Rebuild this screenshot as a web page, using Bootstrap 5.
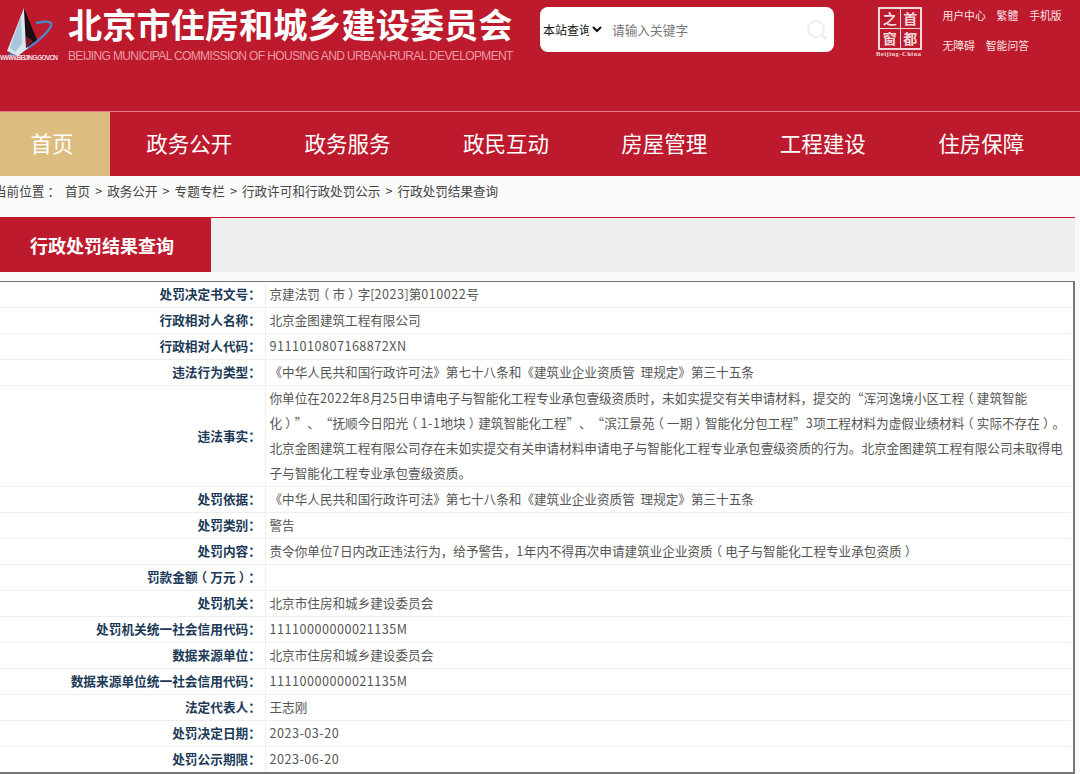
<!DOCTYPE html>
<html lang="zh-CN">
<head>
  <meta charset="UTF-8">
  <meta name="viewport" content="width=device-width, initial-scale=1">
  <title>行政处罚结果查询</title>
  <link href="https://cdn.jsdelivr.net/npm/bootstrap@5.3.0/dist/css/bootstrap.min.css" rel="stylesheet">
  <style>
    body {
      background: #fafafa;
      font-family: "Noto Sans CJK SC", "Liberation Sans", sans-serif;
      font-size: 12.7px;
      color: #555;
      overflow: hidden;
      text-spacing-trim: space-all;
    }
    a { color: inherit; text-decoration: none; }
    /* centred full-width punctuation */
    .pn { font-family: "Noto Sans CJK TC", sans-serif; }
    .pl, .pr { font-feature-settings: "halt"; margin: 0 3.15px; }
    /* digits run a bit wider in the reference */
    .num { letter-spacing: .5px; }
    .wide-space { word-spacing: 3px; }

    /* header */
    .site-top {
      height: 112px;
      background: #bd1a2d;
      border-bottom: 1px solid #e27a86;
    }
    .site-logo { width: 60px; height: 64px; flex: none; margin-top: 2px; }
    .site-names { width: 472px; margin-left: 8px; flex: none; }
    .site-title {
      color: #fff;
      font-size: 34.2px;
      font-weight: 700;
      line-height: 44px;
      margin: 1px 0 0;
      white-space: nowrap;
    }
    .site-sub {
      font-family: "Liberation Sans", sans-serif;
      color: #eb9aa4;
      font-size: 12px;
      line-height: 16px;
      letter-spacing: -.63px;
      margin-top: 3px;
      white-space: nowrap;
    }
    .search-box {
      width: 294px;
      height: 45px;
      margin: 7px 0 0 0;
      background: #fff;
      border-radius: 8px;
      flex: none;
    }
    .search-box select {
      border: 0;
      background: transparent;
      color: #111;
      font-size: 12px;
      width: 66px;
      margin-left: -1px;
      padding: 0;
      outline: 0;
    }
    .search-box input {
      border: 0;
      outline: 0;
      width: 180px;
      margin-left: 5px;
      font-size: 12.7px;
      background: transparent;
    }
    .search-box input::placeholder { color: #777; }
    .search-ico { margin-right: 6px; }
    .seal-wrap { width: 46px; margin: 7px 0 0 44px; flex: none; }
    .seal-box {
      width: 44px;
      height: 43px;
      border: 2px solid #f3d8db;
      display: grid;
      grid-template-columns: 1fr 1fr;
      grid-template-rows: 1fr 1fr;
      gap: 1px;
      background: #f3d8db;
    }
    .seal-box span {
      background: #bd1a2d;
      color: #f3d8db;
      font-size: 14px;
      line-height: 19px;
      text-align: center;
      font-weight: 700;
    }
    .seal-en {
      color: #f3d8db;
      font-family: "Liberation Serif", serif;
      font-size: 6.5px;
      font-weight: 700;
      letter-spacing: .5px;
      line-height: 8px;
      white-space: nowrap;
      margin-left: -2px;
    }
    .top-links { margin: 8px 0 0 18.5px; width: 130px; flex: none; color: #fbe4e6; font-size: 10.8px; }
    .top-links div { height: 30px; line-height: 15px; white-space: nowrap; }
    .top-links a { margin-right: 8.5px; }

    /* nav */
    .main-nav { height: 64px; background: #bd1a2d; }
    .main-nav a {
      width: 158.4px;
      line-height: 62px;
      color: #fff;
      font-size: 21.5px;
      text-align: center;
      flex: none;
    }
    .main-nav a.is-home { width: 110px; background: #dcbd7f; padding-right: 6px; }

    .crumbs { height: 41px; line-height: 29px; margin-left: -6px; color: #444; white-space: nowrap; font-size: 12.6px; }
    .crumbs .pn { margin: 0 5px 0 3px; }
    .crumbs i { font-style: normal; margin: 0 5px; }

    /* title bar */
    .title-bar {
      width: 1075px;
      height: 55px;
      background: #eee;
      border-top: 1px solid #bd1a2d;
    }
    .title-bar h1 {
      width: 211px;
      height: 54px;
      margin: 0;
      padding-left: 30px;
      background: #bd1a2d;
      color: #fff;
      font-size: 18px;
      font-weight: 700;
      line-height: 55px;
    }

    /* table */
    .result-wrap {
      width: 1075px;
      margin-top: 9px;
      border: solid #777;
      border-width: 1px 2px 2px 0;
      background: #fff;
      padding-right: 2px;
    }
    .result-table { margin: 0; table-layout: fixed; --bs-table-bg: #fff; }
    .result-table th, .result-table td {
      padding: 0 0 2px;
      border: 0;
      border-bottom: 1px solid #eee;
      line-height: 23px;
      font-size: 12.6px;
      vertical-align: middle;
    }
    .result-table tr:last-child th, .result-table tr:last-child td { border-bottom: 0; }
    .result-table th {
      width: 265px;
      padding-right: 3.5px;
      text-align: right;
      color: #1c3a57;
      font-size: 12.7px;
      font-weight: 700;
      border-right: 1px solid #eee;
    }
    .result-table td { padding-left: 4px; color: #555; white-space: nowrap; }
    .result-table td.long-cell { padding-bottom: 0; line-height: 25px; }
    .long-cell div { margin: -1px 0 1px; }
  </style>
</head>
<body>

  <!-- header -->
  <div class="site-top d-flex">
    <svg class="site-logo" viewBox="0 0 60 64">
      <path d="M9 53 C26 50 46 34 51 24 C53 19 46 19 36 21" fill="none" stroke="#4d86c6" stroke-width="2.5"/>
      <path d="M24 6 L7 49 L18 54 L28 46 Z" fill="#dbe7f0"/>
      <path d="M21 14 L10 46 L15 50 L22 42 Z" fill="#a9c6dc"/>
      <path d="M24 6 L26 46 L37 38 Z" fill="#1a0d12"/>
      <path d="M26 34 L33 39 L26 46 Z" fill="#7c1722"/>
      <text x="0" y="58" font-size="6.5" font-weight="700" fill="#f2dfe1" font-family="Liberation Sans, sans-serif" textLength="58">WWW.BEIJING.GOV.CN</text>
    </svg>
    <div class="site-names">
      <div class="site-title">北京市住房和城乡建设委员会</div>
      <div class="site-sub">BEIJING MUNICIPAL COMMISSION OF HOUSING AND URBAN-RURAL DEVELOPMENT</div>
    </div>
    <form class="search-box d-flex align-items-center">
      <select aria-label="范围"><option>本站查询</option></select>
      <input type="text" placeholder="请输入关键字">
      <svg class="ms-auto search-ico" width="22" height="22" viewBox="0 0 22 22" fill="none" stroke="#eeeeee" stroke-width="2">
        <circle cx="10" cy="10" r="8"/>
        <path d="M16 16 L20 20" stroke-width="3"/>
      </svg>
    </form>
    <div class="seal-wrap">
      <div class="seal-box">
        <span>之</span><span>首</span><span>窗</span><span>都</span>
      </div>
      <div class="seal-en">Beijing-China</div>
    </div>
    <div class="top-links">
      <div><a href="#">用户中心</a> <a href="#">繁體</a> <a href="#">手机版</a></div>
      <div><a href="#">无障碍</a> <a href="#">智能问答</a></div>
    </div>
  </div>

  <!-- nav -->
  <nav class="main-nav d-flex">
    <a class="is-home" href="#">首页</a>
    <a href="#">政务公开</a>
    <a href="#">政务服务</a>
    <a href="#">政民互动</a>
    <a href="#">房屋管理</a>
    <a href="#">工程建设</a>
    <a href="#">住房保障</a>
  </nav>

  <div class="crumbs">
    当前位置<span class="pn">：</span><a href="#">首页</a><i>&gt;</i><a href="#">政务公开</a><i>&gt;</i><a href="#">专题专栏</a><i>&gt;</i><a href="#">行政许可和行政处罚公示</a><i>&gt;</i><a href="#">行政处罚结果查询</a>
  </div>

  <div class="title-bar">
    <h1>行政处罚结果查询</h1>
  </div>

  <div class="result-wrap">
    <table class="table result-table">
      <tbody>
        <tr><th>处罚决定书文号<span class="pn">：</span></th><td>京建法罚<span class="pl">（</span>市<span class="pr">）</span>字[<span class="num">2023</span>]第<span class="num">010022</span>号</td></tr>
        <tr><th>行政相对人名称<span class="pn">：</span></th><td>北京金图建筑工程有限公司</td></tr>
        <tr><th>行政相对人代码<span class="pn">：</span></th><td class="num">9111010807168872XN</td></tr>
        <tr><th>违法行为类型<span class="pn">：</span></th><td class="wide-space">《中华人民共和国行政许可法》第七十八条和《建筑业企业资质管 理规定》第三十五条</td></tr>
        <tr>
          <th>违法事实<span class="pn">：</span></th>
          <td class="long-cell"><div>你单位在<span class="num">2022</span>年<span class="num">8</span>月<span class="num">25</span>日申请电子与智能化工程专业承包壹级资质时，未如实提交有关申请材料，提交的“浑河逸境小区工程<span class="pl">（</span>建筑智能<br>化<span class="pr">）</span>”、“抚顺今日阳光<span class="pl">（</span><span class="num">1-1</span>地块<span class="pr">）</span>建筑智能化工程”、“滨江景苑<span class="pl">（</span>一期<span class="pr">）</span>智能化分包工程”<span class="num">3</span>项工程材料为虚假业绩材料<span class="pl">（</span>实际不存在<span class="pr">）</span>。<br>北京金图建筑工程有限公司存在未如实提交有关申请材料申请电子与智能化工程专业承包壹级资质的行为。北京金图建筑工程有限公司未取得电<br>子与智能化工程专业承包壹级资质。</div></td>
        </tr>
        <tr><th>处罚依据<span class="pn">：</span></th><td class="wide-space">《中华人民共和国行政许可法》第七十八条和《建筑业企业资质管 理规定》第三十五条</td></tr>
        <tr><th>处罚类别<span class="pn">：</span></th><td>警告</td></tr>
        <tr><th>处罚内容<span class="pn">：</span></th><td>责令你单位<span class="num">7</span>日内改正违法行为，给予警告，<span class="num">1</span>年内不得再次申请建筑业企业资质<span class="pl">（</span>电子与智能化工程专业承包资质<span class="pr">）</span></td></tr>
        <tr><th>罚款金额<span class="pl">（</span>万元<span class="pr">）</span><span class="pn">：</span></th><td></td></tr>
        <tr><th>处罚机关<span class="pn">：</span></th><td>北京市住房和城乡建设委员会</td></tr>
        <tr><th>处罚机关统一社会信用代码<span class="pn">：</span></th><td class="num">11110000000021135M</td></tr>
        <tr><th>数据来源单位<span class="pn">：</span></th><td>北京市住房和城乡建设委员会</td></tr>
        <tr><th>数据来源单位统一社会信用代码<span class="pn">：</span></th><td class="num">11110000000021135M</td></tr>
        <tr><th>法定代表人<span class="pn">：</span></th><td>王志刚</td></tr>
        <tr><th>处罚决定日期<span class="pn">：</span></th><td class="num">2023-03-20</td></tr>
        <tr><th>处罚公示期限<span class="pn">：</span></th><td class="num">2023-06-20</td></tr>
      </tbody>
    </table>
  </div>

  <script src="https://cdn.jsdelivr.net/npm/bootstrap@5.3.0/dist/js/bootstrap.bundle.min.js"></script>
</body>
</html>
